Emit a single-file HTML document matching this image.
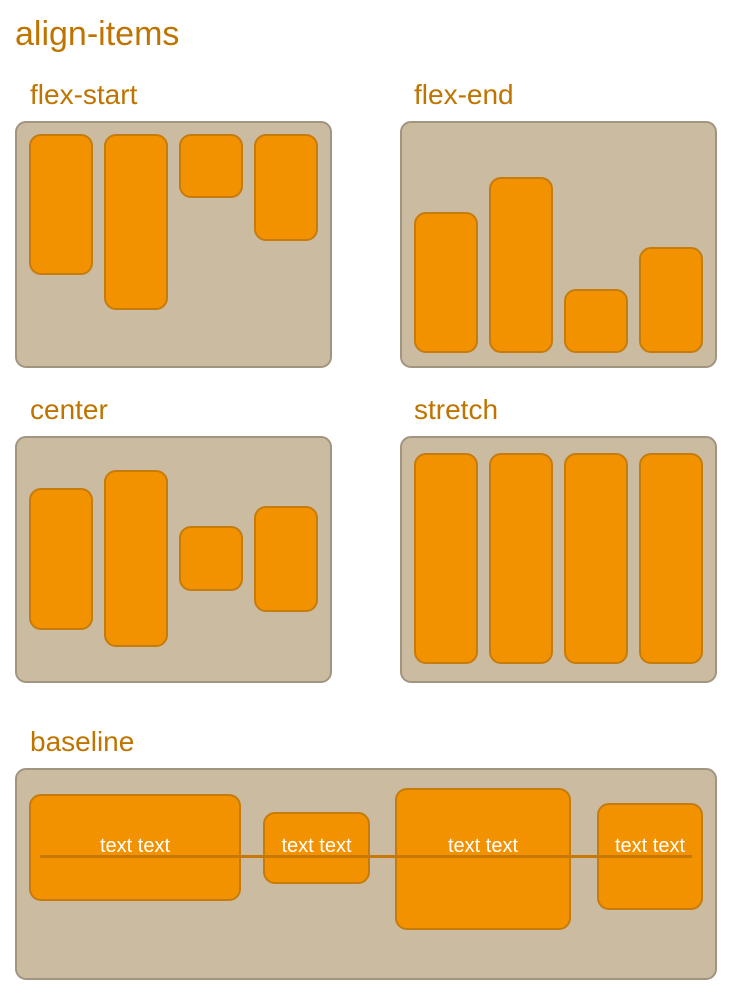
<!DOCTYPE html>
<html><head><meta charset="utf-8"><style>
html,body{margin:0;padding:0;background:#fff;width:734px;height:1001px;overflow:hidden;position:relative;font-family:"Liberation Sans",Arial,sans-serif}
.t{position:absolute;color:#bf7400;white-space:nowrap}
.c{position:absolute;box-sizing:border-box;background:#cbbba0;border:2px solid #a29580;border-radius:11px}
.b{position:absolute;box-sizing:border-box;background:#f29200;border:2px solid #c57c0c;border-radius:12px;color:#fff;font-size:20px;text-align:center}
.b span{position:absolute;left:0;right:0;top:var(--ty)}
.line{position:absolute;left:40px;top:855px;width:652px;height:3px;background:#c77805}
</style></head><body>
<div class="t" style="left:15px;top:15px;font-size:34px">align-items</div>
<div class="t" style="left:30px;top:79px;font-size:28px">flex-start</div>
<div class="t" style="left:414px;top:79px;font-size:28px">flex-end</div>
<div class="t" style="left:30px;top:394px;font-size:28px">center</div>
<div class="t" style="left:414px;top:394px;font-size:28px">stretch</div>
<div class="t" style="left:30px;top:726px;font-size:28px">baseline</div>

<div class="c" style="left:15px;top:121px;width:317px;height:247px"></div>
<div class="c" style="left:400px;top:121px;width:317px;height:247px"></div>
<div class="c" style="left:15px;top:436px;width:317px;height:247px"></div>
<div class="c" style="left:400px;top:436px;width:317px;height:247px"></div>
<div class="c" style="left:15px;top:768px;width:702px;height:212px"></div>

<div class="b" style="left:29px;top:134px;width:64px;height:141px"></div>
<div class="b" style="left:104px;top:134px;width:64px;height:176px"></div>
<div class="b" style="left:179px;top:134px;width:64px;height:64px"></div>
<div class="b" style="left:254px;top:134px;width:64px;height:107px"></div>

<div class="b" style="left:414px;top:212px;width:64px;height:141px"></div>
<div class="b" style="left:489px;top:177px;width:64px;height:176px"></div>
<div class="b" style="left:564px;top:289px;width:64px;height:64px"></div>
<div class="b" style="left:639px;top:247px;width:64px;height:106px"></div>

<div class="b" style="left:29px;top:488px;width:64px;height:142px"></div>
<div class="b" style="left:104px;top:470px;width:64px;height:177px"></div>
<div class="b" style="left:179px;top:526px;width:64px;height:65px"></div>
<div class="b" style="left:254px;top:506px;width:64px;height:106px"></div>

<div class="b" style="left:414px;top:453px;width:64px;height:211px"></div>
<div class="b" style="left:489px;top:453px;width:64px;height:211px"></div>
<div class="b" style="left:564px;top:453px;width:64px;height:211px"></div>
<div class="b" style="left:639px;top:453px;width:64px;height:211px"></div>

<div class="b" style="left:29px;top:794px;width:212px;height:107px"><span style="--ty:39px">text text</span></div>
<div class="b" style="left:263px;top:812px;width:107px;height:72px"><span style="--ty:21px">text text</span></div>
<div class="b" style="left:395px;top:788px;width:176px;height:142px"><span style="--ty:45px">text text</span></div>
<div class="b" style="left:597px;top:803px;width:106px;height:107px"><span style="--ty:30px">text text</span></div>
<div class="line"></div>
</body></html>
